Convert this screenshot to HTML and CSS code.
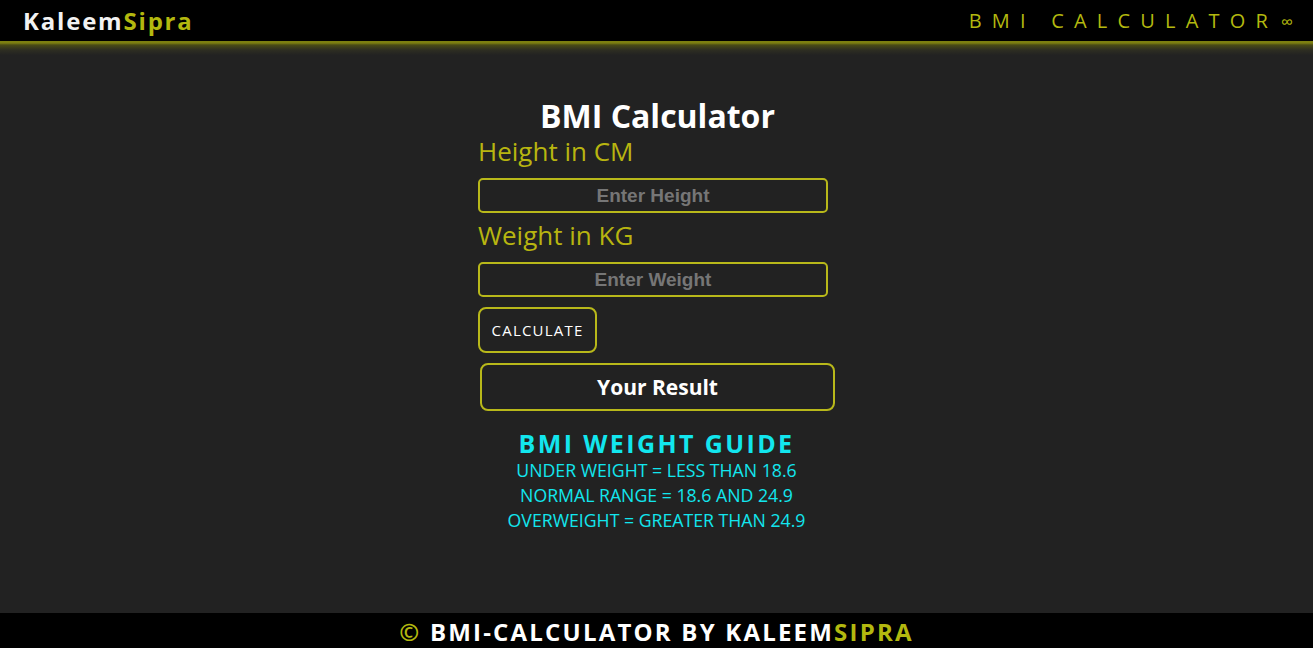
FILE: index.html
```html
<!DOCTYPE html>
<html>
<head>
<meta charset="utf-8">
<link rel="stylesheet" href="styles.css">
</head>
<body>
<header class="topbar">
  <div class="brand">Kaleem<span class="accent">Sipra</span></div>
  <div class="apptitle">BMI CALCULATOR<span class="inf">∞</span></div>
</header>
<div class="glow"></div>
<main class="content">
  <div class="card">
    <h1 class="title">BMI Calculator</h1>
    <label class="label">Height in CM</label>
    <input class="field" type="text" placeholder="Enter Height">
    <label class="label">Weight in KG</label>
    <input class="field" type="text" placeholder="Enter Weight">
    <button class="calc">CALCULATE</button>
    <div class="result">Your Result</div>
    <div class="guide">
      <h2 class="guide-title">BMI WEIGHT GUIDE</h2>
      <p class="guide-line">UNDER WEIGHT = LESS THAN 18.6</p>
      <p class="guide-line">NORMAL RANGE = 18.6 AND 24.9</p>
      <p class="guide-line">OVERWEIGHT = GREATER THAN 24.9</p>
    </div>
  </div>
</main>
<footer class="footer"><span class="accent">©</span> BMI-CALCULATOR BY KALEEM<span class="accent">SIPRA</span></footer>
</body>
</html>
```
FILE: styles.css
```css
html, body {
  margin: 0;
  padding: 0;
  height: 100%;
}
body {
  background: #222222;
  font-family: "Open Sans", "DejaVu Sans", sans-serif;
  display: flex;
  flex-direction: column;
  min-height: 648px;
}
.topbar {
  background: #000;
  height: 41px;
  display: flex;
  align-items: center;
  justify-content: space-between;
  padding: 0 20px 0 23px;
  box-sizing: border-box;
}
.brand {
  color: #f2f2f2;
  font-weight: 700;
  font-size: 24px;
  letter-spacing: 1.8px;
}
.accent {
  color: #b3b80f;
}
.apptitle {
  color: #b3b80f;
  font-size: 20px;
  letter-spacing: 10.2px;
  font-weight: 400;
}
.inf {
  letter-spacing: 0;
  font-size: 17px;
  margin-left: 3px;
}
.glow {
  height: 14px;
  background: linear-gradient(#7d7f10 0, #7d7f10 2px, #4a4b16 4px, #2e2e22 9px, #222 14px);
}
.content {
  flex: 1;
  display: flex;
  justify-content: center;
}
.card {
  width: 357px;
  padding-top: 42px;
  display: flex;
  flex-direction: column;
  align-items: flex-start;
}
.title {
  align-self: center;
  margin: 0 0 0 2px;
  color: #fff;
  font-size: 32px;
  font-weight: 700;
  line-height: 38px;
}
.label {
  color: #b8b510;
  font-size: 26px;
  line-height: 32px;
  margin: 0 0 11px 0;
}
.field {
  width: 350px;
  height: 35px;
  box-sizing: border-box;
  background: #222;
  border: 2px solid #b8b81a;
  border-radius: 5px;
  text-align: center;
  font-family: "Liberation Sans", Arial, sans-serif;
  font-weight: 700;
  font-size: 19px;
  color: #fff;
  margin-bottom: 6px;
  outline: none;
}
.field::placeholder {
  color: #767676;
}
.calc {
  width: 119px;
  height: 46px;
  box-sizing: border-box;
  margin-top: 4px;
  background: #222;
  border: 2px solid #b8b81a;
  border-radius: 8px;
  color: #fff;
  font-family: "Open Sans", "DejaVu Sans", sans-serif;
  font-size: 15px;
  letter-spacing: 1.2px;
  padding: 0;
}
.result {
  margin: 10px 0 0 2px;
  width: 355px;
  height: 48px;
  box-sizing: border-box;
  border: 2px solid #b8b81a;
  border-radius: 8px;
  color: #fff;
  font-weight: 700;
  font-size: 21px;
  display: flex;
  align-items: center;
  justify-content: center;
}
.guide {
  align-self: stretch;
  text-align: center;
  color: #12e6ee;
  margin-top: 17px;
}
.guide-title {
  margin: 0;
  font-size: 25px;
  letter-spacing: 2.4px;
  line-height: 30px;
  font-weight: 700;
}
.guide-line {
  margin: 0;
  font-size: 17.7px;
  line-height: 25px;
}
.footer {
  background: #000;
  height: 35px;
  color: #fff;
  font-weight: 700;
  font-size: 24px;
  letter-spacing: 2.2px;
  text-align: center;
  line-height: 38px;
}
```
